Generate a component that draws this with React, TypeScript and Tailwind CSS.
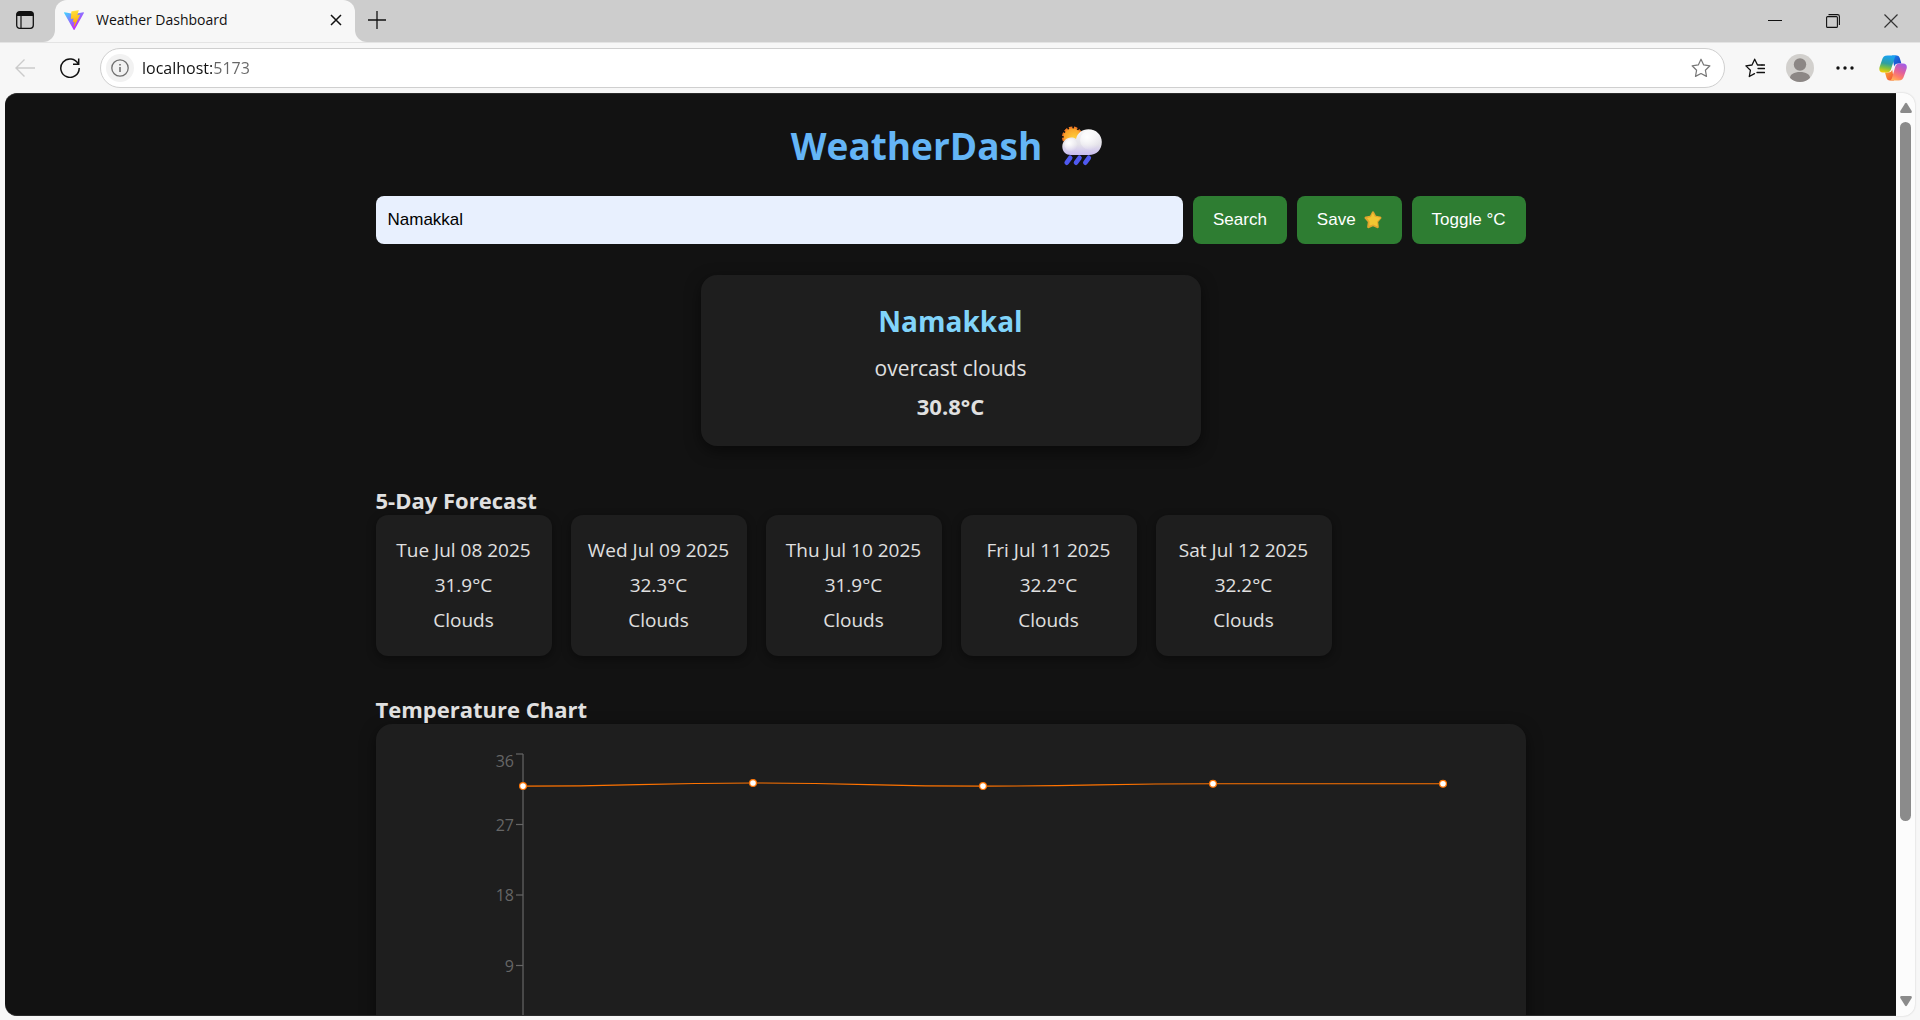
import { useState } from "react";

const days = [
  { date: "Tue Jul 08 2025", temp: 31.9, sky: "Clouds" },
  { date: "Wed Jul 09 2025", temp: 32.3, sky: "Clouds" },
  { date: "Thu Jul 10 2025", temp: 31.9, sky: "Clouds" },
  { date: "Fri Jul 11 2025", temp: 32.2, sky: "Clouds" },
  { date: "Sat Jul 12 2025", temp: 32.2, sky: "Clouds" },
];

function TabActionsIcon() {
  return (
    <svg width="18" height="18" viewBox="0 0 18 18" fill="none" aria-hidden="true">
      <rect x="0.7" y="0.7" width="16.6" height="16.6" rx="3" stroke="#111" strokeWidth="1.3" />
      <path d="M0.7 5V3.2A2.5 2.5 0 0 1 3.2 0.7H14.8A2.5 2.5 0 0 1 17.3 3.2V5Z" fill="#111" />
      <path d="M5 5V17" stroke="#111" strokeWidth="1.2" />
    </svg>
  );
}

function ViteIcon() {
  return (
    <svg width="20" height="20" viewBox="0 0 256 257" aria-hidden="true">
      <defs>
        <linearGradient id="vite-a" x1="-0.8%" x2="57.6%" y1="7.7%" y2="78.4%">
          <stop offset="0%" stopColor="#41D1FF" />
          <stop offset="100%" stopColor="#BD34FE" />
        </linearGradient>
        <linearGradient id="vite-b" x1="43.4%" x2="50.3%" y1="2.2%" y2="89%">
          <stop offset="0%" stopColor="#FFEA83" />
          <stop offset="8.3%" stopColor="#FFDD35" />
          <stop offset="100%" stopColor="#FFA800" />
        </linearGradient>
      </defs>
      <path
        fill="url(#vite-a)"
        d="M255.153 37.938L134.897 252.976c-2.483 4.44-8.862 4.466-11.382.048L.875 37.958c-2.746-4.814 1.371-10.646 6.827-9.67l120.385 21.517a6.537 6.537 0 0 0 2.322-.004l117.867-21.483c5.438-.991 9.574 4.796 6.877 9.62Z"
      />
      <path
        fill="url(#vite-b)"
        d="M185.432.063L96.44 17.501a3.268 3.268 0 0 0-2.634 3.014l-5.474 92.456a3.268 3.268 0 0 0 3.997 3.378l24.777-5.718c2.318-.535 4.413 1.507 3.936 3.838l-7.361 36.047c-.495 2.426 1.782 4.5 4.151 3.78l15.304-4.649c2.372-.72 4.652 1.36 4.15 3.788l-11.698 56.621c-.732 3.542 3.979 5.473 5.943 2.437l1.313-2.028l72.516-144.72c1.215-2.423-.88-5.186-3.54-4.672l-25.505 4.922c-2.396.462-4.435-1.77-3.759-4.114l16.646-57.705c.677-2.35-1.37-4.583-3.769-4.113Z"
      />
    </svg>
  );
}

function RainEmoji() {
  return (
    <svg width="40" height="40" viewBox="0 0 40 40" role="img" aria-label="Rain cloud with sun">
      <defs>
        <linearGradient id="cloud" x1="0" y1="0" x2="0" y2="1">
          <stop offset="0%" stopColor="#f7f7f8" />
          <stop offset="60%" stopColor="#e3e1e8" />
          <stop offset="100%" stopColor="#c9bdf0" />
        </linearGradient>
        <radialGradient id="puff" cx="0.35" cy="0.35" r="0.7">
          <stop offset="0%" stopColor="#ffffff" />
          <stop offset="100%" stopColor="#ffffff" stopOpacity="0" />
        </radialGradient>
        <radialGradient id="sun" cx="0.6" cy="0.6" r="0.6">
          <stop offset="0%" stopColor="#ffd23c" />
          <stop offset="100%" stopColor="#f9a028" />
        </radialGradient>
      </defs>
      <circle cx="10.5" cy="11" r="9.3" fill="none" stroke="#f07a24" strokeWidth="2.4" strokeDasharray="3.4 1.6" />
      <circle cx="10.5" cy="11" r="8.8" fill="url(#sun)" />
      <path
        d="M9 29C4 29 0.300 25.500 0.300 20.500C0.300 15.500 4.300 11.500 9 11.500C11 11.500 12.600 12 14 12.900C15.200 7.400 20 3.200 26.500 3.200C34 3.200 39.800 8.700 39.800 15.900C39.800 23.500 34.500 29 27 29Z"
        fill="url(#cloud)"
      />
      <circle cx="28" cy="14" r="10" fill="url(#puff)" />
      <circle cx="9" cy="19" r="6.500" fill="url(#puff)" />
      <g stroke="#4f59f0" strokeWidth="4.600" strokeLinecap="round">
        <path d="M8.200 31.800L4.700 36.700" />
        <path d="M17.500 31.800L14 36.700" />
        <path d="M26.800 31.800L23.300 36.700" />
      </g>
    </svg>
  );
}

function StarEmoji() {
  return (
    <svg width="18" height="18" viewBox="0 0 17 17" role="img" aria-label="star">
      <path
        d="M7.400 1.100C7.900 0.100 9.100 0.100 9.600 1.100L11.300 4.600L15.300 5.200C16.500 5.400 16.900 6.600 16.100 7.400L13.400 10.300L14 14.700C14.200 15.900 13.200 16.600 12.200 16.100L8.500 14.300L4.800 16.100C3.800 16.600 2.800 15.900 3 14.700L3.600 10.300L0.900 7.400C0.100 6.600 0.500 5.400 1.700 5.200L5.700 4.600Z"
        fill="#e2a52d"
      />
      <path
        d="M8.300 1.800L10.300 5.500L15.600 6.300L12.300 10.100L12.900 14.700L8.500 12.700L5 13.900L5.200 9.800L2.900 6.600L6.600 5.600Z"
        fill="#f1c632"
      />
    </svg>
  );
}

function CopilotIcon() {
  return (
    <svg width="28" height="28" viewBox="0 0 28 28" aria-hidden="true">
      <defs>
        <linearGradient id="cp-a" x1="0.4" y1="0" x2="0.2" y2="1">
          <stop offset="0%" stopColor="#18a2f2" />
          <stop offset="45%" stopColor="#2f9fa0" />
          <stop offset="70%" stopColor="#7cc043" />
          <stop offset="100%" stopColor="#ffd000" />
        </linearGradient>
        <linearGradient id="cp-b" x1="0.8" y1="0" x2="0.3" y2="1">
          <stop offset="0%" stopColor="#a05ce8" />
          <stop offset="45%" stopColor="#e0609e" />
          <stop offset="75%" stopColor="#ff7f68" />
          <stop offset="100%" stopColor="#ffb357" />
        </linearGradient>
        <linearGradient id="cp-c" x1="0" y1="0" x2="1" y2="1">
          <stop offset="0%" stopColor="#1b7fe8" />
          <stop offset="100%" stopColor="#1a3fc4" />
        </linearGradient>
        <linearGradient id="cp-d" x1="0" y1="0" x2="1" y2="1">
          <stop offset="0%" stopColor="#ffb02e" />
          <stop offset="100%" stopColor="#ef4a3c" />
        </linearGradient>
      </defs>
      <path d="M13 1.500H17.500C19.500 1.500 20.300 2.500 20.900 4.500L22.400 9.500H19.500C16.500 9.500 16 10.500 15.200 12.500Z" fill="url(#cp-c)" />
      <path d="M15 26.500H11C8.800 26.500 8 25.500 7.400 23.500L6 18.500H9C12 18.500 12.500 17.500 13.200 15.500Z" fill="url(#cp-d)" />
      <path d="M8.500 1.500H18C16.500 1.700 15.900 2.900 15.300 5L12.300 14.500C11.500 17.400 10.300 18.500 7.500 18.500H4C0.700 18.500 -0.200 16.200 0.600 13L3 6C3.900 2.900 5.300 1.500 8.500 1.500Z" fill="url(#cp-a)" />
      <path d="M19.500 26.500H10.500C12 26.300 12.700 25.100 13.300 23L16 13.500C16.800 10.600 18 9.500 20.500 9.500H24C27.300 9.500 28.400 11.800 27.500 15L25 22C24.100 25.100 22.700 26.500 19.500 26.500Z" fill="url(#cp-b)" />
    </svg>
  );
}

const starPath =
  "M10 1.200L12.700 6.900L18.900 7.800L14.400 12.200L15.500 18.400L10 15.500L4.500 18.400L5.600 12.200L1.100 7.800L7.300 6.900Z";

function TabStrip() {
  return (
    <header className="flex h-[42px] shrink-0 text-[#111]">
      <button
        aria-label="Tab actions"
        className="flex w-[55px] items-center justify-center rounded-br-xl bg-[#cdcdcd] pr-[5px] pb-[2px]"
      >
        <TabActionsIcon />
      </button>
      <div className="w-[300px] bg-[#cdcdcd]">
        <div className="flex h-full items-center rounded-t-xl bg-[#f7f7f7] pr-3 pb-[2px] pl-[9px]">
          <ViteIcon />
          <span className="ml-3 flex-1 font-['Open_Sans','Noto_Sans',sans-serif] text-sm">Weather Dashboard</span>
          <button aria-label="Close tab" className="p-[1px]">
            <svg width="12" height="12" viewBox="0 0 12 12" stroke="#111" strokeWidth="1.5" aria-hidden="true">
              <path d="M1 1L11 11M11 1L1 11" />
            </svg>
          </button>
        </div>
      </div>
      <div className="flex flex-1 items-center justify-between rounded-bl-xl bg-[#cdcdcd]">
        <button aria-label="New tab" className="ml-[13px] pb-[2px]">
          <svg width="18" height="18" viewBox="0 0 18 18" stroke="#111" strokeWidth="1.3" aria-hidden="true">
            <path d="M9 0V18M0 9H18" />
          </svg>
        </button>
        <div className="mr-[22px] flex items-center gap-11">
          <button aria-label="Minimize">
            <svg width="14" height="14" viewBox="0 0 14 14" stroke="#111" strokeWidth="1" aria-hidden="true">
              <path d="M0 6.500H14" />
            </svg>
          </button>
          <button aria-label="Restore">
            <svg width="14" height="14" viewBox="0 0 14 14" fill="none" stroke="#111" strokeWidth="1.1" aria-hidden="true">
              <rect x="0.600" y="2.600" width="10.800" height="10.800" rx="1" />
              <path d="M2.500 0.600H11.500Q13.400 0.600 13.400 2.500V11" />
            </svg>
          </button>
          <button aria-label="Close window">
            <svg width="14" height="14" viewBox="0 0 14 14" stroke="#333" strokeWidth="1.200" aria-hidden="true">
              <path d="M0.500 0.500L13.500 13.500M13.500 0.500L0.500 13.500" />
            </svg>
          </button>
        </div>
      </div>
    </header>
  );
}

function Toolbar() {
  const [url, setUrl] = useState("localhost:5173");
  return (
    <nav className="flex h-[51px] shrink-0 items-center border-t border-[#e4e4e4] pr-[13px] pl-[15px]">
      <button aria-label="Back" className="mr-[25px]" disabled>
        <svg width="20" height="18" viewBox="0 0 20 18" fill="none" stroke="#cbcbcb" strokeWidth="1.400" aria-hidden="true">
          <path d="M20 9H1M9.500 0.500L1 9L9.500 17.500" />
        </svg>
      </button>
      <button aria-label="Refresh" className="mr-5">
        <svg width="20" height="20" viewBox="0 0 20 20" fill="none" stroke="#111" strokeWidth="1.500" aria-hidden="true">
          <path d="M18.200 6A9.200 9.200 0 1 0 19.200 10" />
          <path d="M18.700 0.500V6.200H13" />
        </svg>
      </button>
      <div className="flex h-10 flex-1 items-center rounded-full border border-[#cfcfcf] bg-white pr-[13px] pl-[5px]">
        <button aria-label="Site information" className="flex size-7 items-center justify-center rounded-full bg-[#f2f2f2]">
          <svg width="18" height="18" viewBox="0 0 18 18" fill="none" stroke="#707070" strokeWidth="1.300" aria-hidden="true">
            <circle cx="9" cy="9" r="8.200" />
            <path d="M9 8V13M9 5V6.500" strokeWidth="1.600" />
          </svg>
        </button>
        <input
          aria-label="Address"
          value={url}
          onChange={(e) => setUrl(e.target.value)}
          className="ml-2 min-w-0 flex-1 bg-linear-to-r from-[#111] from-[70px] to-[#666] to-[70px] bg-clip-text font-['Open_Sans','Noto_Sans',sans-serif] text-base text-transparent outline-none"
        />
        <button aria-label="Add to favorites">
          <svg width="20" height="20" viewBox="0 0 20 20" fill="none" stroke="#777" strokeWidth="1.200" strokeLinejoin="round" aria-hidden="true">
            <path d={starPath} />
          </svg>
        </button>
      </div>
      <button aria-label="Favorites" className="ml-5">
        <svg width="20" height="20" viewBox="0 0 20 20" fill="none" stroke="#111" strokeWidth="1.300" strokeLinejoin="round" strokeLinecap="round" aria-hidden="true">
          <path d="M17 7H12.500L9.700 1.200L7 7L0.900 7.900L5.400 12.300L4.300 18.500L9.500 15.600" />
          <path d="M13 10.500H19.500M12 14.500H19.500M17 7H19.500" />
        </svg>
      </button>
      <button aria-label="Profile" className="ml-[21px]">
        <svg width="28" height="28" viewBox="0 0 28 28" aria-hidden="true">
          <clipPath id="avatar">
            <circle cx="14" cy="14" r="14" />
          </clipPath>
          <g clipPath="url(#avatar)">
            <rect width="28" height="28" fill="#d2d0cd" />
            <circle cx="14" cy="10.500" r="6.200" fill="#8c8785" />
            <path d="M4 28V24C4 20.500 8 18 14 18S24 20.500 24 24V28Z" fill="#8c8785" />
          </g>
        </svg>
      </button>
      <button aria-label="Settings and more" className="ml-[22px]">
        <svg width="18" height="4" viewBox="0 0 18 4" fill="#111" aria-hidden="true">
          <circle cx="2" cy="2" r="1.700" />
          <circle cx="9" cy="2" r="1.700" />
          <circle cx="16" cy="2" r="1.700" />
        </svg>
      </button>
      <button aria-label="Copilot" className="ml-[25px]">
        <CopilotIcon />
      </button>
    </nav>
  );
}

function TemperatureChart() {
  const top = 30;
  const perDegree = 282 / 36;
  const y = (t: number) => top + (36 - t) * perDegree;
  const x = (i: number) => 147 + i * 230;
  const line = days
    .map((d, i) => {
      if (i === 0) return `M${x(0)} ${y(d.temp)}`;
      const mid = (x(i - 1) + x(i)) / 2;
      return `C${mid} ${y(days[i - 1].temp)} ${mid} ${y(d.temp)} ${x(i)} ${y(d.temp)}`;
    })
    .join("");
  return (
    <svg
      viewBox="0 0 1150 375"
      className="block w-full font-['Open_Sans','Noto_Sans',sans-serif] text-base"
      role="img"
      aria-label="Temperature over five days"
    >
      <path d={`M147 ${top}V${y(0)}H1067`} fill="none" stroke="#666" strokeWidth="1.200" />
      {[36, 27, 18, 9].map((t) => (
        <g key={t}>
          <path d={`M140 ${y(t)}H147`} stroke="#666" strokeWidth="1.200" />
          <text x="138" y={t === 36 ? y(t) + 13 : y(t) + 6} textAnchor="end" fill="#666">
            {t}
          </text>
        </g>
      ))}
      <path d={line} fill="none" stroke="#ff7300" strokeWidth="1.200" />
      {days.map((d, i) => (
        <circle key={d.date} cx={x(i)} cy={y(d.temp)} r="3.400" fill="#fff" stroke="#ff7300" strokeWidth="1.200" />
      ))}
    </svg>
  );
}

const buttonClass =
  "flex items-center justify-center gap-2 rounded-lg bg-[#2e7d32] px-5 text-[17px] text-white";

function Dashboard() {
  const [city, setCity] = useState("Namakkal");
  return (
    <main className="min-w-0 flex-1 overflow-hidden rounded-l-xl border-y border-[#2b2b2b] bg-[#121212] px-6 pt-[22px] font-['Open_Sans','Noto_Sans',sans-serif] text-[#e0e0e0]">
      <div className="mx-auto max-w-[1150px]">
        <h1 className="flex items-center justify-center gap-5 pr-2 text-[37px] leading-[60px] font-bold text-[#64b5f6]">
          WeatherDash <RainEmoji />
        </h1>
        <form
          onSubmit={(e) => e.preventDefault()}
          className="mt-5 flex h-12 gap-[10px] font-['Liberation_Sans',Arial,sans-serif]"
        >
          <input
            aria-label="City"
            value={city}
            onChange={(e) => setCity(e.target.value)}
            className="min-w-0 flex-1 rounded-lg bg-[#e8f0fe] px-3 text-[17px] text-black outline-none"
          />
          <button type="submit" className={buttonClass}>
            Search
          </button>
          <button type="button" className={buttonClass}>
            Save <StarEmoji />
          </button>
          <button type="button" className={buttonClass}>
            Toggle °C
          </button>
        </form>

        <section className="mx-auto mt-[31px] max-w-[500px] rounded-2xl bg-[#1e1e1e] px-6 pt-6 pb-[21px] text-center shadow-[0_5px_15px_rgba(0,0,0,0.5)]">
          <h2 className="text-[28px] leading-[44px] font-bold text-[#81d4fa]">Namakkal</h2>
          <p className="mt-[6px] text-[21px] leading-[38px]">overcast clouds</p>
          <p className="text-[22px] leading-[38px] font-bold">30.8°C</p>
        </section>

        <h3 className="mt-[39px] text-[22px] leading-[30px] font-bold">5-Day Forecast</h3>
        <ul className="flex flex-wrap gap-[19px]">
          {days.map((d) => (
            <li
              key={d.date}
              className="w-[176px] rounded-xl bg-[#1e1e1e] py-[18px] text-center text-[19px] leading-[35px] whitespace-nowrap shadow-[0_3px_10px_rgba(0,0,0,0.4)]"
            >
              <p>{d.date}</p>
              <p>{d.temp}°C</p>
              <p>{d.sky}</p>
            </li>
          ))}
        </ul>

        <h3 className="mt-[38px] text-[22px] leading-[30px] font-bold">Temperature Chart</h3>
        <section className="rounded-2xl bg-[#1e1e1e] shadow-[0_5px_15px_rgba(0,0,0,0.5)]">
          <TemperatureChart />
        </section>
      </div>
    </main>
  );
}

function ScrollRail() {
  return (
    <div className="flex w-[19px] flex-col items-center rounded-r-xl bg-[#fcfcfc] py-[9px] shadow-[0_0_2px_rgba(0,0,0,0.2)]" aria-hidden="true">
      <svg width="12" height="12" viewBox="0 0 12 12" fill="#8b8b8b">
        <path d="M5 1.500Q6 0.200 7 1.500L11.700 9Q12.200 11 10.500 11H1.500Q-0.200 11 0.300 9Z" />
      </svg>
      <div className="mt-2 w-[11px] flex-[700] rounded-full bg-[#8b8b8b]" />
      <div className="flex-[174]" />
      <svg width="12" height="12" viewBox="0 0 12 12" fill="#8b8b8b">
        <path d="M5 10.500Q6 11.800 7 10.500L11.700 3Q12.200 1 10.500 1H1.500Q-0.200 1 0.300 3Z" />
      </svg>
    </div>
  );
}

export default function App() {
  return (
    <div className="flex h-screen flex-col overflow-hidden bg-[#f7f7f7]">
      <TabStrip />
      <Toolbar />
      <div className="flex min-h-0 flex-1 pr-[5px] pb-1 pl-[5px]">
        <Dashboard />
        <ScrollRail />
      </div>
    </div>
  );
}
